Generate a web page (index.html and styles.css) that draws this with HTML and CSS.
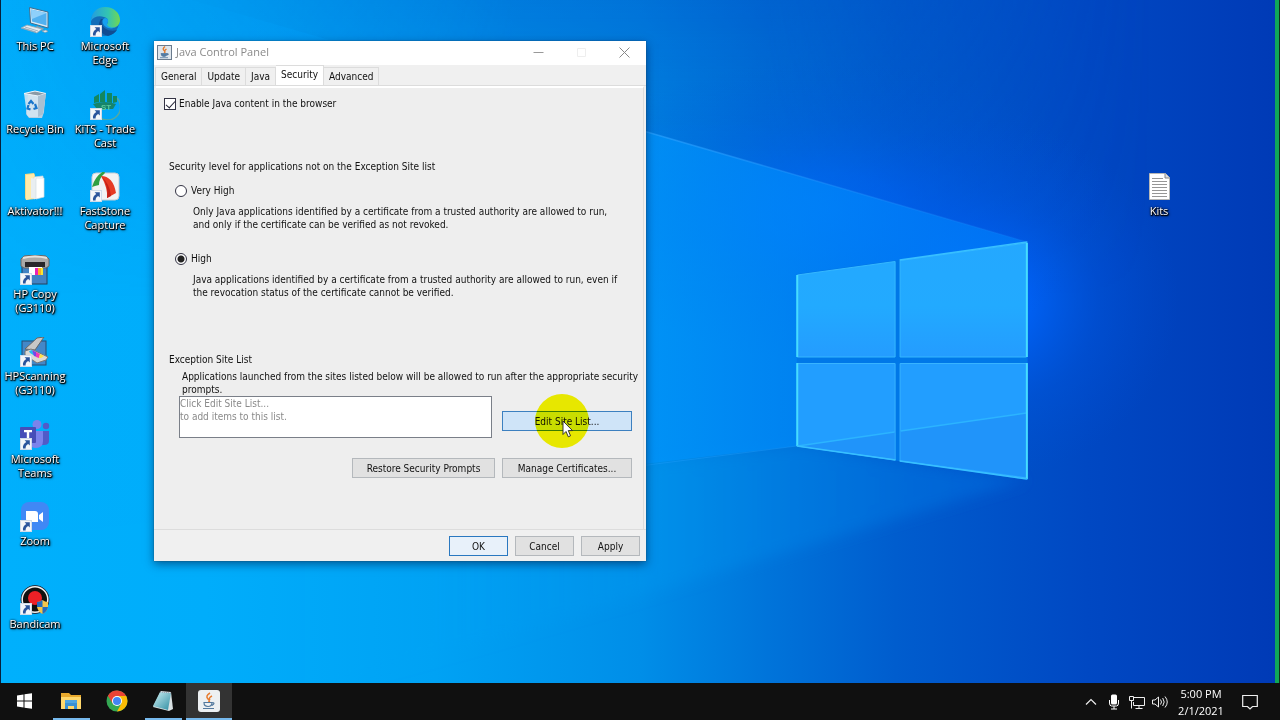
FILE: index.html
```html
<!DOCTYPE html>
<html lang="en">
<head>
<meta charset="utf-8">
<title>Java Control Panel</title>
<link rel="stylesheet" href="styles.css">
</head>
<body>
<svg class="defs" aria-hidden="true">
  <symbol id="shortcut" viewBox="0 0 12 12">
    <rect x="0.5" y="0.5" width="11" height="11" fill="#f4f6fa" stroke="#cfdcea"/>
    <path d="M4.600 2.200h5.200v5.200L8.200 5.900C6.400 6.700 5.500 8.200 5.600 10.500H3C2.600 7.600 3.800 5.200 6.300 3.900z" fill="#2a549c"/>
  </symbol>
</svg>
<main class="desktop">
  <svg class="wallpaper" viewBox="0 0 1280 683" preserveAspectRatio="none" aria-hidden="true">
    <defs>
      <linearGradient id="base" x1="0" x2="1" y1="0" y2="0">
        <stop offset="0" stop-color="#00b0fc"/><stop offset="0.16" stop-color="#00adfb"/><stop offset="0.34" stop-color="#00a2f4"/>
        <stop offset="0.5" stop-color="#008ee8"/><stop offset="0.6" stop-color="#0074da"/><stop offset="0.7" stop-color="#005dce"/>
        <stop offset="0.85" stop-color="#0048c3"/><stop offset="1" stop-color="#003ab6"/>
      </linearGradient>
      <linearGradient id="topShade" x1="0" x2="0" y1="0" y2="1">
        <stop offset="0" stop-color="#0044bc" stop-opacity="0.4"/><stop offset="1" stop-color="#0050c8" stop-opacity="0"/>
      </linearGradient>
      <linearGradient id="shadeFade" x1="0" x2="1" y1="0" y2="0">
        <stop offset="0" stop-color="#fff" stop-opacity="0.1"/><stop offset="0.4" stop-color="#fff" stop-opacity="0.9"/><stop offset="0.6" stop-color="#fff" stop-opacity="0.9"/><stop offset="0.9" stop-color="#fff" stop-opacity="0"/>
      </linearGradient>
      <mask id="shadeMask"><rect width="1280" height="683" fill="url(#shadeFade)"/></mask>
      <radialGradient id="glow">
        <stop offset="0" stop-color="#006aff"/><stop offset="0.25" stop-color="#0064fc" stop-opacity="0.8"/><stop offset="0.6" stop-color="#0058e6" stop-opacity="0.35"/><stop offset="1" stop-color="#0050d8" stop-opacity="0"/>
      </radialGradient>
      <linearGradient id="beam" gradientUnits="userSpaceOnUse" x1="200" x2="1028" y1="0" y2="0">
        <stop offset="0" stop-color="#00a8ff" stop-opacity="0.1"/><stop offset="0.55" stop-color="#0094fc" stop-opacity="0.7"/><stop offset="1" stop-color="#007cfa" stop-opacity="0.7"/>
      </linearGradient>
      <linearGradient id="lowBeam" gradientUnits="userSpaceOnUse" x1="300" x2="1028" y1="0" y2="0">
        <stop offset="0" stop-color="#00a8f8" stop-opacity="0"/><stop offset="0.5" stop-color="#0098f0" stop-opacity="0.35"/><stop offset="1" stop-color="#006ce0" stop-opacity="0.5"/>
      </linearGradient>
      <linearGradient id="pane" x1="0" x2="0" y1="0" y2="1">
        <stop offset="0" stop-color="#24a8ff"/><stop offset="0.55" stop-color="#22aaff"/><stop offset="1" stop-color="#249cff"/>
      </linearGradient>
      <linearGradient id="ray" gradientUnits="userSpaceOnUse" x1="640" x2="1028" y1="0" y2="0">
        <stop offset="0" stop-color="#30a4ff" stop-opacity="0.6"/><stop offset="1" stop-color="#2890ff" stop-opacity="0.1"/>
      </linearGradient>
      <filter id="soft" x="-10%" y="-10%" width="120%" height="120%"><feGaussianBlur stdDeviation="7"/></filter>
    </defs>
    <rect width="1280" height="683" fill="url(#base)"/>
    <rect width="1280" height="300" fill="url(#topShade)" mask="url(#shadeMask)"/>
    <ellipse cx="980" cy="300" rx="200" ry="180" fill="url(#glow)"/>
    <ellipse cx="830" cy="210" rx="280" ry="150" fill="url(#glow)" opacity="0.6"/>
    <path d="M1028 480L0 786V540L797 446z" fill="url(#lowBeam)" filter="url(#soft)"/>
    <path d="M1028 242L0 -55V540L797 446L1028 413z" fill="url(#beam)"/>
    <path d="M640 130L1028 242" stroke="url(#ray)" stroke-width="1.500"/>
    <path d="M640 466L797 446" stroke="#20a0ff" stroke-opacity="0.4"/>
    <path d="M797 274L1028 242V480L797 446z" fill="#0078e8"/>
    <path d="M797.500 275L895.500 261.500V357H797.500zM900.500 260.500L1027 243V357H900.500z" fill="url(#pane)" stroke="#35b8ff" stroke-width="1"/>
    <path d="M797.500 363.500H895.500V460L797.500 446zM900.500 363.500H1027V478L900.500 461z" fill="#229eff" stroke="#38b4ff" stroke-width="1"/>
    <path d="M798 446L895 432V459zM901 431L1027 413V477L901 460z" fill="#2094fa"/>
    <path d="M798 446L895 432M901 431L1027 413" stroke="#2cb4ff" stroke-width="1.500"/>
    <path d="M1027.500 243V357M1027.500 363V479M797.500 275V357M797.500 363V446" stroke="#46dcff" stroke-width="2"/>
    <path d="M797 446L896 460M900 461L1028 479M900 260L1028 242" stroke="#38c0ff" stroke-width="1.500"/>
  </svg>

  <nav class="icons" aria-label="Desktop">
    <a class="icon" href="#"><svg viewBox="0 0 30 30"><path d="M9.500 0.500L28 5v16L10.500 16z" fill="#d9e9f4" stroke="#3f6d8d"/><path d="M11 2.500L26.500 6v12.500L12 14.500z" fill="#51b1f0"/><path d="M11 2.500L26.500 6L12 12z" fill="#8fd0fa"/><path d="M17 19l7 2.500-2 2-8-2.500z" fill="#8ba0ae"/><path d="M1 21l6-3 15 4-5 4z" fill="#e4ebef" stroke="#8ca5b5" stroke-width="0.800"/><path d="M5 20l13 4M3 21l13 4M22 24l4-1 2 1.500-3 1z" stroke="#7e9aac" stroke-width="0.700" fill="#eee"/></svg><span>This PC</span></a>
    <a class="icon" href="#"><svg viewBox="0 0 30 30"><path d="M8 4l15-1 2 5-1 14-2 6H9L6 24z" fill="#b5cfe4"/><path d="M4 3.500L15 1l11 2.500-3 21L18 27H9l-2-2z" fill="#d3e4f1" opacity="0.900"/><path d="M4 3.500L15 1l11 2.500-8 2.500z" fill="#8b9aa6" stroke="#edf5fa"/><path d="M18 6l8-2.500L23 24.500 18 27z" fill="#a9c0d2"/><path d="M8.500 14l2.500-3 2.500 3M15 14l1.500 4-3 1M10.500 19.500l-3-1 1-3.500" fill="none" stroke="#1976cb" stroke-width="2.200"/></svg><span>Recycle Bin</span></a>
    <a class="icon" href="#"><svg viewBox="0 0 30 30"><path d="M5 2l9-1 1 2v24l-9 1-1-2z" fill="#f8da83"/><path d="M6 3l8-1v24l-8 2z" fill="#ffebac"/><path d="M14 5l9-1v20l-9 3z" fill="#fafcfd" stroke="#cad6dc" stroke-width="0.700"/><path d="M11 6l5 1v20l-5-1z" fill="#e9eef1"/><path d="M16 6h8v19l-8 2z" fill="#fff" stroke="#d4dde2" stroke-width="0.700"/></svg><span>Aktivator!!!</span></a>
    <a class="icon" href="#"><svg viewBox="0 0 30 30"><rect x="2" y="4" width="25" height="25" fill="#4183c4" stroke="#23415f"/><path d="M4 1Q15-1 26 1l3 3v7l-3 2H4l-3-2V4z" fill="#aaa9a7" stroke="#666"/><path d="M3 3q12-3 24 0" stroke="#e5e2dd" stroke-width="2" fill="none"/><path d="M5 7h20v5H5z" fill="#292729"/><path d="M9 12h13v8H9z" fill="#fff"/><path d="M15 13h3v7h-3z" fill="#ed22b6"/><path d="M18 13h3v7h-3z" fill="#ffae22"/><path d="M21 13h2v7h-2z" fill="#f9e733"/><use href="#shortcut" x="0" y="18" width="12" height="12"/></svg><span>HP Copy (G3110)</span></a>
    <a class="icon" href="#"><svg viewBox="0 0 30 30"><rect x="2" y="4" width="24" height="24" fill="#4388c8" stroke="#294c70"/><path d="M5 12L17 1l7-1-9 13z" fill="#c8c8c7" stroke="#666"/><path d="M5 14l6-2 17 8-2 3-9 3-12-8z" fill="#dcdad5" stroke="#777"/><path d="M9 14l3-1 3 6-5-3z" fill="#25b8ef"/><path d="M12 13l4 2 1 5-3-1z" fill="#7546e6"/><path d="M16 15l4 2-1 4-3-1z" fill="#f037b5"/><path d="M20 17l4 2-3 2h-2z" fill="#ffe240"/><use href="#shortcut" x="0" y="18" width="12" height="12"/></svg><span>HPScanning (G3110)</span></a>
    <a class="icon" href="#"><svg viewBox="0 0 30 30"><circle cx="26" cy="6" r="3.200" fill="#515bc8"/><path d="M21 11h8v10q0 4-5 4h-3z" fill="#515bc8"/><circle cx="17" cy="4.500" r="4.500" fill="#7b83eb"/><path d="M11 11h12v10q0 7-7 7-5 0-7-4z" fill="#7b83eb"/><rect x="0" y="7" width="16" height="16" rx="1" fill="#464eb8"/><path d="M4 10h8v2.200H9.200V18H6.800v-5.800H4z" fill="#fff"/><use href="#shortcut" x="0" y="18" width="12" height="12"/></svg><span>Microsoft Teams</span></a>
    <a class="icon" href="#"><svg viewBox="0 0 30 30"><rect x="1" y="0" width="28" height="28" rx="8" fill="#4088f5"/><path d="M6 9h9q3 0 3 3v8H9q-3 0-3-3zM19 13l4-3v10l-4-3z" fill="#fff"/><use href="#shortcut" x="0" y="18" width="12" height="12"/></svg><span>Zoom</span></a>
    <a class="icon" href="#"><svg viewBox="0 0 30 30"><circle cx="15" cy="14.500" r="14" fill="#111" stroke="#253344"/><circle cx="15" cy="14.500" r="12.800" fill="none" stroke="#f3f3f3" stroke-width="1.500"/><circle cx="15" cy="13" r="7" fill="#ed2026"/><path d="M17 17q3 0 5.500-2 2.500 2 5.500 2v5q-1 5-5.500 7Q18 27 17 22z" fill="#f4c54b"/><path d="M17 17q3 0 5.500-2v7H17z" fill="#246bbd"/><path d="M22.500 22H28q-1 5-5.500 7z" fill="#246bbd"/><use href="#shortcut" x="0" y="18" width="12" height="12"/></svg><span>Bandicam</span></a>
    <a class="icon" href="#"><svg viewBox="0 0 30 30"><defs><linearGradient id="edge1" x1="0" x2="1"><stop offset="0" stop-color="#239ce0"/><stop offset="0.600" stop-color="#34c5b0"/><stop offset="1" stop-color="#74d74f"/></linearGradient></defs><circle cx="15" cy="15" r="14" fill="#126db9"/><path d="M1 14C1 6 7 0 15 0c9 0 15 6 15 13 0 5-4 8-8 8-4 0-6-2-5-4 2-3 1-6-3-7C9 8 3 10 1 14z" fill="url(#edge1)"/><path d="M11 12c-5 7-1 15 7 17 4-1 7-3 9-6-7 2-14-1-15-6-1-2 0-4 1-5z" fill="#104c92"/><path d="M17 17c2-3 1-6-2-6-4 1-3 8 3 10 4 1 7 0 9-2-4 3-10 1-10-2z" fill="#159ff0"/><use href="#shortcut" x="0" y="18" width="12" height="12"/></svg><span>Microsoft Edge</span></a>
    <a class="icon" href="#"><svg viewBox="0 0 30 30"><path d="M27 8A13 13 0 0 1 8 26" fill="none" stroke="#55a9a0" stroke-width="1.500"/><path d="M4 7l5-3v8l-5 1zM10 4l5-4v12h-5zM17 3h5v10l-5-1zM23 6h4v6l-4 1z" fill="#13875f"/><path d="M3 14q11-4 23 0l-3 5H7z" fill="#16846c"/><text x="11" y="20" class="kits-mark">ST</text><use href="#shortcut" x="0" y="18" width="12" height="12"/></svg><span>KiTS - Trade Cast</span></a>
    <a class="icon" href="#"><svg viewBox="0 0 30 30"><rect x="2" y="1" width="27" height="27" rx="4" fill="#f2f3f3" stroke="#c5ced4"/><path d="M2 15Q5 4 14-1l1 2Q9 6 9 13l-4 1z" fill="#2f9f42"/><path d="M11 4Q23 4 26 21l-9 5q1-10-6-22z" fill="#e63b23"/><path d="M11 4q8 9 6 22l4-2Q20 12 11 4z" fill="#c52218"/><use href="#shortcut" x="0" y="18" width="12" height="12"/></svg><span>FastStone Capture</span></a>
  </nav>

  <a class="icon kits" href="#"><svg viewBox="0 0 30 30"><path d="M5.500 1.500h16l4 4v22h-20z" fill="#fff" stroke="#b7b7b7"/><path d="M21 1.500V6h4.500" fill="#ddd" stroke="#888"/><path d="M8 6.500h11M8 9.500h15M8 12.500h15M8 15.500h15M8 18.500h15M8 21.500h15M8 24.500h15" stroke="#969696"/></svg><span>Kits</span></a>

  <section class="window" aria-label="Java Control Panel">
    <header class="titlebar">
      <svg class="app-icon" viewBox="0 0 15 15"><rect x="0.500" y="0.500" width="14" height="14" fill="#dfe6ec" stroke="#6a7b8d"/><path d="M8 1.500Q5 4 7 5.500T7 8M9.500 4Q7 5.500 8 7" fill="none" stroke="#e27a2d" stroke-width="1.400"/><path d="M4 8.500h6q0 3-3 3T4 8.500zM10 8.500q3 0 0 2M3 12.700h8" fill="#547ba2" stroke="#547ba2" stroke-width="0.800"/></svg>
      <h1 class="title">Java Control Panel</h1>
      <button class="caption" aria-label="Minimize"><svg viewBox="0 0 11 11"><path d="M0.500 5.500h10" stroke="#999"/></svg></button>
      <button class="caption" aria-label="Maximize" disabled><svg viewBox="0 0 11 11"><path d="M1.500 1.500h8v8h-8z" stroke="#eee" fill="none"/></svg></button>
      <button class="caption" aria-label="Close"><svg viewBox="0 0 11 11"><path d="M0.500 0.500l10 10M10.500 0.500l-10 10" stroke="#888"/></svg></button>
    </header>
    <div class="tabs" role="tablist">
      <button class="tab" role="tab">General</button>
      <button class="tab" role="tab">Update</button>
      <button class="tab" role="tab">Java</button>
      <button class="tab selected" role="tab" aria-selected="true">Security</button>
      <button class="tab" role="tab">Advanced</button>
    </div>
    <div class="panel" role="tabpanel">
      <label class="option enable"><input class="check" type="checkbox" checked>Enable Java content in the browser</label>
      <fieldset class="levels">
        <legend>Security level for applications not on the Exception Site list</legend>
        <label class="option"><input class="radio" type="radio" name="level">Very High</label>
        <p class="note">Only Java applications identified by a certificate from a trusted authority are allowed to run,<br>and only if the certificate can be verified as not revoked.</p>
        <label class="option"><input class="radio" type="radio" name="level" checked>High</label>
        <p class="note">Java applications identified by a certificate from a trusted authority are allowed to run, even if<br>the revocation status of the certificate cannot be verified.</p>
      </fieldset>
      <h2 class="heading">Exception Site List</h2>
      <label class="sites-label" for="sites">Applications launched from the sites listed below will be allowed to run after the appropriate security prompts.</label>
      <div class="sites-row">
        <textarea id="sites" class="sites" readonly>Click Edit Site List...
to add items to this list.</textarea>
        <div class="pointer-host">
          <button class="button hot">Edit Site List...</button>
          <span class="halo"></span>
          <svg class="cursor" viewBox="0 0 12 18" aria-hidden="true"><path d="M1 1v13.500l3-3 2.300 5.300 2.200-1L6.300 10.600H10.500z" fill="#fff" stroke="#222" stroke-width="0.900"/></svg>
        </div>
      </div>
      <div class="actions">
        <button class="button">Restore Security Prompts</button>
        <button class="button">Manage Certificates...</button>
      </div>
    </div>
    <footer class="footer">
      <button class="button default">OK</button>
      <button class="button">Cancel</button>
      <button class="button">Apply</button>
    </footer>
  </section>
</main>

<footer class="taskbar">
  <button class="task" aria-label="Start"><svg viewBox="0 0 22 22"><path d="M3 5.500l6.500-1v6H3zM10.500 4.300L18 3.200v7.300h-7.500zM3 11.500h6.500v6L3 16.600zM10.500 11.500H18v7.300l-7.500-1.100z" fill="#fff"/></svg></button>
  <button class="task open" aria-label="File Explorer"><svg viewBox="0 0 22 22"><path d="M1 3h8l2 2h10v14H1z" fill="#e9aa2d"/><path d="M1 7h20v12H1z" fill="#ffd86c"/><path d="M5 12h12v7h-3v-3H8v3H5z" fill="#3991d3"/><path d="M5 10h12v3H5z" fill="#4ca5e2"/></svg></button>
  <button class="task" aria-label="Chrome"><svg viewBox="0 0 22 22"><circle cx="11" cy="11" r="10.500" fill="#34a853"/><path d="M11 11L1.900 5.700A10.500 10.500 0 0 1 20.200 6H11z" fill="#ea4335"/><path d="M11 6h9.200A10.500 10.500 0 0 1 11 21.500l4.400-8z" fill="#fbbc05"/><path d="M1.900 5.700L6.700 13.500 11 11V6z" fill="#ea4335"/><circle cx="11" cy="11" r="5" fill="#fff"/><circle cx="11" cy="11" r="4" fill="#4285f4"/></svg></button>
  <button class="task open" aria-label="Notepad"><svg viewBox="0 0 22 22"><defs><linearGradient id="np" x1="0" x2="1" y1="0" y2="1"><stop offset="0" stop-color="#d0f2f5"/><stop offset="1" stop-color="#2e8da2"/></linearGradient></defs><path d="M9 1l10 1 2 17-4 2L1 17z" fill="#d9e1e3"/><path d="M8 2l11 1-3 17-15-4z" fill="url(#np)"/><path d="M8 2l11 1" stroke="#99a" stroke-dasharray="1 1"/></svg></button>
  <button class="task open active" aria-label="Java Control Panel"><svg viewBox="0 0 22 22"><rect x="0" y="0" width="22" height="22" rx="3" fill="#edf0f2"/><path d="M12 3Q7 6 10 9T10 12M14 6q-4 2-2 4" fill="none" stroke="#e77b2f" stroke-width="1.500"/><path d="M6 12.500h8q0 4-4 4t-4-4zM14 12.500q4 0 0 3M5 18.500h11" fill="none" stroke="#54799e" stroke-width="1.200"/></svg></button>
  <div class="tray">
    <button class="tray-item" aria-label="Show hidden icons"><svg viewBox="0 0 16 16"><path d="M3 10.500l5-5 5 5" fill="none" stroke="#eee" stroke-width="1.200"/></svg></button>
    <button class="tray-item" aria-label="Microphone"><svg viewBox="0 0 16 16"><rect x="5" y="0.500" width="6" height="10" rx="1.500" fill="#fff"/><path d="M3.500 6v3q0 3 2 3h5q2 0 2-3V6M8 12v3M5 15h6" fill="none" stroke="#fff"/></svg></button>
    <button class="tray-item" aria-label="Network"><svg viewBox="0 0 16 16"><path d="M5 3.500h10.500v8H4.500V8M10 12v2.500M6.500 14.500h7M0.500 2.500h4v4h-4zM2.500 7v7.500" fill="none" stroke="#eee"/></svg></button>
    <button class="tray-item" aria-label="Volume"><svg viewBox="0 0 16 16"><path d="M0.500 6h2.500L6.500 3v10L3 10H0.500zM8.500 5.500q2 2.500 0 5M10.700 4q3 4 0 8M13 2.500q4.500 5.500 0 11" fill="none" stroke="#eee"/></svg></button>
    <time class="clock">5:00 PM<br>2/1/2021</time>
    <button class="tray-item" aria-label="Notifications"><svg viewBox="0 0 16 16"><path d="M0.700 1.500h14.600v11H10.500L8 15 5.500 12.500H0.700z" fill="none" stroke="#eee" stroke-width="1.200"/></svg></button>
  </div>
</footer>
</body>
</html>
```

FILE: styles.css
```css
* { box-sizing: border-box; }
body {
  margin: 0;
  height: 100vh;
  display: flex;
  flex-direction: column;
  overflow: hidden;
  background: #101010;
  font-family: "Open Sans", "Noto Sans", sans-serif;
  font-size: 11px;
}
button { font: inherit; color: inherit; margin: 0; padding: 0; border: 0; background: none; }
a { color: inherit; text-decoration: none; }
.defs { position: absolute; width: 0; height: 0; }

.desktop {
  flex: 1;
  position: relative;
  border-left: 1px solid #06203c;
  border-right: 1px solid #10301c;
  overflow: hidden;
}
.desktop::after {
  content: "";
  position: absolute;
  top: 0;
  right: 0;
  bottom: 0;
  width: 4px;
  background: #10a858;
}
.wallpaper { position: absolute; width: 100%; height: 100%; }

.icons {
  position: relative;
  display: grid;
  grid-auto-flow: column;
  grid-template-rows: repeat(8, 1fr);
  grid-auto-columns: 70px;
  justify-content: start;
  height: 660px;
  margin-left: -1px;
}
.icon {
  display: flex;
  flex-direction: column;
  align-items: center;
  gap: 2px;
  padding-top: 7px;
  color: #fff;
  line-height: 14px;
  text-align: center;
  text-shadow: 0 1px 1px #000, 1px 1px 1px #000, 0 0 2px #000, 1px 1px 3px #000;
}
.icon svg { width: 30px; height: 30px; }
.kits { position: absolute; left: 1123px; top: 165px; width: 70px; }
.kits-mark { font: bold 8px "Liberation Sans", sans-serif; fill: #58c99b; text-shadow: none; }

.window {
  position: absolute;
  left: 153px;
  top: 41px;
  width: 492px;
  background: #f0f0f0;
  color: #111;
  font-family: "DejaVu Sans Condensed", "Open Sans", sans-serif;
  font-size: 10px;
  line-height: 13px;
  box-shadow: 0 0 1px #245, 0 3px 9px rgba(0, 20, 60, 0.55);
}
.titlebar { display: flex; align-items: center; height: 24px; padding: 0 0 2px 3px; background: #fff; }
.app-icon { width: 15px; height: 15px; }
.title {
  flex: 1;
  margin: 0 0 0 4px;
  font: 11px/14px "Open Sans", "Noto Sans", sans-serif;
  color: #8a8a8a;
}
.caption { width: 43px; height: 22px; }
.caption svg { width: 11px; height: 11px; vertical-align: middle; }

.tabs { display: flex; align-items: flex-end; height: 21px; padding-left: 1px; border-bottom: 1px solid #dcdcdc; }
.tab { height: 18px; padding: 0 5px; border: 1px solid #dcdcdc; border-left-width: 0; border-bottom: 0; }
.tab:first-child { border-left-width: 1px; }
.tab.selected { height: 20px; padding-bottom: 2px; background: #fff; }

.panel {
  height: 443px;
  margin: 0 2px;
  padding: 9px 3px 0 8px;
  background: #eee;
  border-top: 2px solid #fff;
  border-right: 1px solid #dcdcdc;
}
.option { display: flex; align-items: center; gap: 4px; }
.enable { gap: 3px; }
.check, .radio { appearance: none; flex: none; width: 12px; height: 12px; margin: 0; border: 1px solid #334; background: #fff; }
.check { position: relative; }
.check:checked::after {
  content: "";
  position: absolute;
  left: 3px;
  top: 0;
  width: 4px;
  height: 8px;
  border: solid #223;
  border-width: 0 1px 1px 0;
  transform: rotate(42deg);
}
.radio { border-radius: 50%; }
.radio:checked { background: radial-gradient(circle, #222 3px, #fff 4px); }
.levels { margin: 50px 0 0; padding: 0 0 0 11px; border: 0; min-width: 0; }
.levels legend { margin-left: -6px; padding: 0 0 11px; }
.note { margin: 8px 0 21px 18px; white-space: nowrap; }
.heading { margin: 33px 0 4px 5px; font: inherit; }
.sites-label { display: block; margin-left: 18px; }
.sites-row { display: grid; grid-template-columns: 313px 130px; gap: 10px; align-items: center; margin: 0 0 0 15px; }
.sites {
  display: block;
  width: 100%;
  height: 42px;
  margin: 0;
  padding: 0;
  border: 1px solid #7a7f88;
  background: #fff;
  color: #8a8a8a;
  font: inherit;
  resize: none;
  overflow: hidden;
}
.pointer-host { position: relative; top: 4px; }
.button { height: 20px; border: 1px solid #b4b8bc; background: #e1e1e1; }
.hot { display: block; width: 100%; border-color: #3c80c0; background: #cfe4f8; }
.halo { position: absolute; left: 33px; top: -17px; width: 54px; height: 54px; border-radius: 50%; background: #f8f800; mix-blend-mode: multiply; pointer-events: none; }
.cursor { position: absolute; left: 60px; top: 9px; width: 12px; height: 18px; }
.actions { display: grid; grid-template-columns: 143px 130px; gap: 7px; justify-content: end; margin: 20px 8px 0 0; }

.footer { display: flex; justify-content: flex-end; gap: 7px; height: 32px; padding: 6px 6px 0 0; border-top: 1px solid #dcdcdc; }
.footer .button { width: 59px; }
.footer .default { border-color: #2a78c0; background: #e8f1fa; }

.taskbar { display: flex; height: 37px; padding-left: 2px; background: #101010; color: #fff; }
.task { display: flex; align-items: center; justify-content: center; width: 46px; border-bottom: 2px solid transparent; position: relative; }
.task svg { width: 22px; height: 22px; }
.task.open::after { content: ""; position: absolute; left: 5px; right: 4px; bottom: -2px; height: 2px; background: #76b9ed; }
.task.active { background: #333; }
.task.active::after { left: 0; right: 0; }
.tray { display: flex; align-items: center; gap: 7px; margin-left: auto; padding-right: 22px; }
.tray-item { display: flex; width: 16px; height: 16px; }
.tray-item svg { width: 16px; height: 16px; }
.clock { width: 54px; margin: 0 7px 0 -1px; line-height: 17px; text-align: center; }
```
